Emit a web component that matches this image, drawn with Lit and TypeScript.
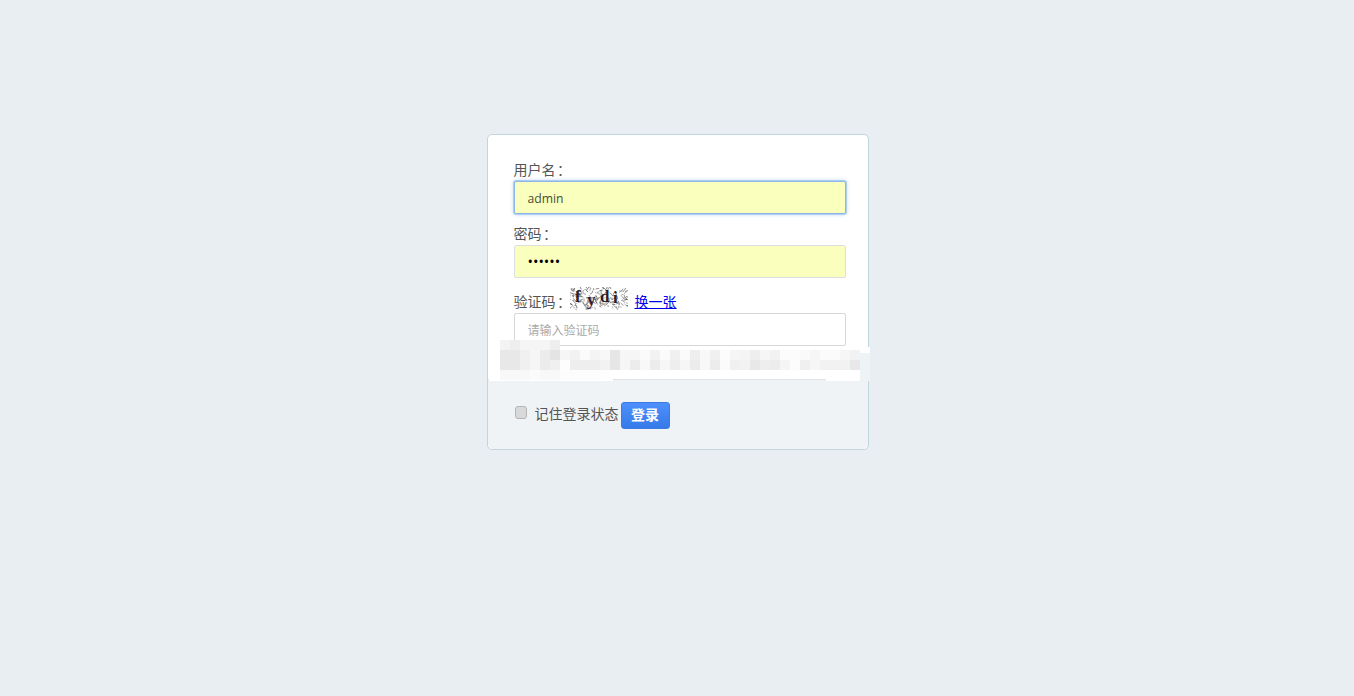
import { LitElement, html, css, svg } from "lit";
import { customElement } from "lit/decorators.js";

const ROWS: { left: number; top: number; cells: string[] }[] = [
  { left: 500, top: 340, cells: "f3 ee f5 f5 f5 ee".split(" ") },
  {
    left: 500,
    top: 350,
    cells: "e8 e8 f0 f6 ec e4 f6 f2 fb f4 f8 e6 f6 f6 fb f2 fb f0 fb ee f8 f0 fc f6 f4 ee f6 f2 fc fc fa f6 fb fb f6 f2".split(" "),
  },
  {
    left: 500,
    top: 360,
    cells: "e8 e8 f0 f6 ec f0 fd ee ee ee f2 e6 f6 ec f8 ec f6 ee f6 ec f8 ec fb f0 f2 e8 ee ec f5 fc f0 f6 f2 f2 f2 e8".split(" "),
  },
  { left: 500, top: 370, cells: "f8 f8 f8 fb f8 f8 fc fc fc fc fd".split(" ") },
];

function noise() {
  let seed = 17;
  const r = () => ((seed = (seed * 9301 + 49297) % 233280) / 233280);
  const out = [];
  for (let i = 0; i < 170; i++) {
    const x = r() * 58;
    const y = r() * 21 + 1;
    const dx = (r() - 0.5) * 8;
    const dy = (r() - 0.5) * 8;
    const g = 70 + Math.floor(r() * 90);
    out.push(
      svg`<line x1=${x} y1=${y} x2=${x + dx} y2=${y + dy} stroke=${`rgb(${g},${g - 6},${g - 6})`} stroke-width="0.7"></line>`
    );
  }
  return out;
}

@customElement("app-root")
export class AppRoot extends LitElement {
  static styles = css`
    :host {
      display: flex;
      justify-content: center;
      box-sizing: border-box;
      min-height: 696px;
      padding: 134px 0 0 1px;
      background: #e8eef1;
      font-family: "Noto Sans CJK SC", "Open Sans", sans-serif;
      font-size: 14px;
      color: #555;
    }
    .card {
      position: relative;
      box-sizing: border-box;
      width: 382px;
      height: 316px;
      border: 1px solid #c2d6dd;
      border-radius: 5px;
      background: #fff;
    }
    .body {
      box-sizing: border-box;
      height: 244px;
      padding: 25px 22px 0 26px;
    }
    label {
      display: block;
      height: 21px;
      line-height: 19px;
    }
    .colon {
      margin-left: -2px;
      vertical-align: -1px;
      font-family: "Noto Sans CJK TC", sans-serif;
    }
    .field {
      display: block;
      box-sizing: border-box;
      width: 100%;
      height: 33px;
      margin: 0 0 10px;
      padding: 0 13px;
      border: 1px solid #dcdfe0;
      border-radius: 2px;
      outline: none;
      background: #faffbd;
      color: #454f3a;
      font-family: "Open Sans", sans-serif;
      font-size: 12.2px;
    }
    .focused {
      padding-top: 1px;
      border-color: #8db8e8;
      box-shadow: 0 0 0 1px rgba(125, 175, 235, 0.5), 0 0 4px rgba(90, 150, 230, 0.5);
    }
    .secret {
      color: #000;
      font-size: 14.5px;
    }
    .plain {
      background: #fff;
      border-color: #d5d8da;
      padding-bottom: 1px;
      font-family: "Noto Sans CJK SC", sans-serif;
      font-size: 12px;
    }
    .plain::placeholder {
      color: #aaa;
    }
    .captcha {
      display: flex;
      align-items: flex-end;
      height: 25px;
    }
    .captcha svg {
      flex: none;
      align-self: flex-start;
      margin: -1px 7px 0 0;
    }
    .captcha label {
      flex: none;
      width: 56px;
    }
    a {
      margin-bottom: 1px;
      color: #0000ee;
      text-decoration: underline;
      line-height: 21px;
    }
    .footer {
      box-sizing: border-box;
      display: flex;
      align-items: center;
      height: 70px;
      padding: 2px 0 0 27px;
      border-top: 1px solid #dde3e6;
      border-radius: 0 0 5px 5px;
      background: #f0f3f6;
    }
    .check {
      appearance: none;
      flex: none;
      width: 12px;
      height: 13px;
      margin: -6px 8px 0 0;
      border: 1px solid #b5b5b5;
      border-radius: 3px;
      box-sizing: border-box;
      background: #d9d9d9;
    }
    .remember {
      flex: none;
      width: 86px;
      padding-bottom: 5px;
      color: #555;
    }
    button {
      flex: none;
      box-sizing: border-box;
      width: 49px;
      height: 27px;
      padding: 0 0 3px;
      border: 1px solid #3c7ce0;
      border-radius: 3px;
      background: linear-gradient(#4d90fe, #357ae8);
      color: #fff;
      font: 700 14px "Noto Sans CJK SC", sans-serif;
    }
    .mask {
      position: absolute;
      left: 1px;
      top: 212px;
      width: 381px;
      height: 32px;
      background: #fff;
    }
    .mask-low-left {
      position: absolute;
      left: 1px;
      top: 244px;
      width: 124px;
      height: 2px;
      background: #fff;
    }
    .mask-low-right {
      position: absolute;
      left: 338px;
      top: 244px;
      width: 44px;
      height: 2px;
      background: #fff;
    }
    .mask-edge {
      position: absolute;
      left: 372px;
      top: 218px;
      width: 10px;
      height: 28px;
      background: #eef3f6;
    }
    .cell {
      position: absolute;
      width: 10px;
      height: 10px;
    }
  `;

  render() {
    return html`
      <div class="card">
        <div class="body">
          <label>用户名<span class="colon">：</span></label>
          <input class="field focused" type="text" value="admin" />
          <label>密码<span class="colon">：</span></label>
          <input class="field secret" type="password" value="123456" />
          <div class="captcha">
            <label>验证码<span class="colon">：</span></label>
            <svg width="58" height="23" viewBox="0 0 58 23" aria-label="验证码图片">
              ${noise()}
              <g font-family="Liberation Serif" font-weight="700" font-size="17" fill="#2a1e22">
                <text x="5" y="15">f</text>
                <text x="17" y="18" fill="#351a30">y</text>
                <text x="30" y="15">d</text>
                <text x="43" y="16">i</text>
              </g>
            </svg>
            <a href="#">换一张</a>
          </div>
          <input class="field plain" type="text" placeholder="请输入验证码" />
        </div>
        <div class="footer">
          <input class="check" type="checkbox" />
          <span class="remember">记住登录状态</span>
          <button type="button">登录</button>
        </div>
        <div class="mask"></div>
        <div class="mask-low-left"></div>
        <div class="mask-low-right"></div>
        <div class="mask-edge"></div>
        ${ROWS.map((row) =>
          row.cells.map(
            (c, i) =>
              html`<div
                class="cell"
                style="left:${row.left - 488 + i * 10}px;top:${row.top - 135}px;background:#${c}${c}${c}"
              ></div>`
          )
        )}
      </div>
    `;
  }
}
